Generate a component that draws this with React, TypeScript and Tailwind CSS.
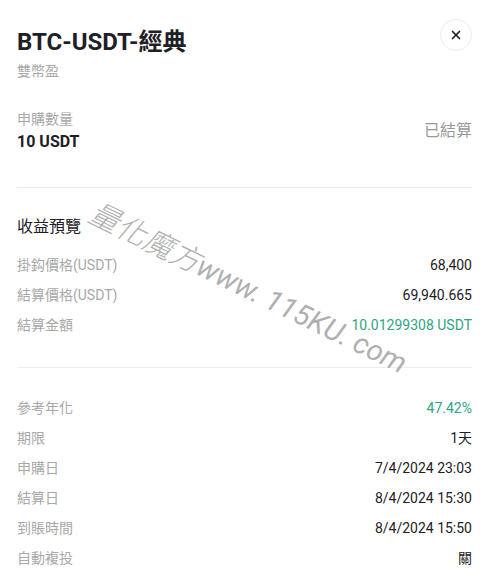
import { X } from "lucide-react";

const font = { fontFamily: 'Roboto, "Noto Sans CJK TC", sans-serif' };

function Row({ label, value, green }: { label: string; value: string; green?: boolean }) {
  return (
    <div className="flex h-[30px] items-center justify-between">
      <span className="text-[14px] text-[#a8a8a8]">{label}</span>
      <span className={`text-[14px] ${green ? "text-[#2ea583]" : "text-[#1e2026]"}`}>{value}</span>
    </div>
  );
}

export default function App() {
  return (
    <div className="relative min-h-[583px] w-full overflow-hidden bg-white pl-[17px] pr-[16px]" style={font}>
      {/* Header */}
      <div className="flex items-start justify-between pt-[27px]">
        <div className="flex flex-col">
          <h1 className="text-[24px] leading-[30px] font-bold text-[#1e2026]">BTC-USDT-經典</h1>
          <span className="mt-[4px] text-[14px] leading-[20px] text-[#a8a8a8]">雙幣盈</span>
        </div>
        <button className="-mt-[8px] flex h-[32px] w-[32px] items-center justify-center rounded-full border border-[#ebebeb]">
          <X className="h-[14px] w-[14px] text-[#1e2026]" strokeWidth={3} />
        </button>
      </div>

      {/* Amount */}
      <div className="mt-[28px] flex items-center justify-between">
        <div className="flex flex-col">
          <span className="text-[14px] leading-[20px] text-[#a8a8a8]">申購數量</span>
          <span className="mt-[2px] text-[16px] leading-[22px] font-bold text-[#1e2026]">10 USDT</span>
        </div>
        <span className="text-[16px] text-[#999999]">已結算</span>
      </div>

      <div className="mt-[34px] h-px bg-[#eeeeee]" />

      {/* Preview */}
      <div className="mt-[28px] text-[16px] leading-[22px] text-[#1e2026]">收益預覽</div>
      <div className="mt-[12px] flex flex-col">
        <Row label="掛鈎價格(USDT)" value="68,400" />
        <Row label="結算價格(USDT)" value="69,940.665" />
        <Row label="結算金額" value="10.01299308 USDT" green />
      </div>

      <div className="mt-[27px] h-px bg-[#eeeeee]" />

      <div className="mt-[25px] flex flex-col">
        <Row label="參考年化" value="47.42%" green />
        <Row label="期限" value="1天" />
        <Row label="申購日" value="7/4/2024 23:03" />
        <Row label="結算日" value="8/4/2024 15:30" />
        <Row label="到賬時間" value="8/4/2024 15:50" />
        <Row label="自動複投" value="關" />
      </div>

      {/* Watermark */}
      <div className="pointer-events-none absolute left-[248px] top-[288px] -translate-x-1/2 -translate-y-1/2 rotate-[26deg] whitespace-nowrap italic text-[#9a9a9a]/80">
        <span className="text-[30px] font-light">量化魔方</span>
        <span className="text-[29px]">www. 115KU. com</span>
      </div>
    </div>
  );
}
